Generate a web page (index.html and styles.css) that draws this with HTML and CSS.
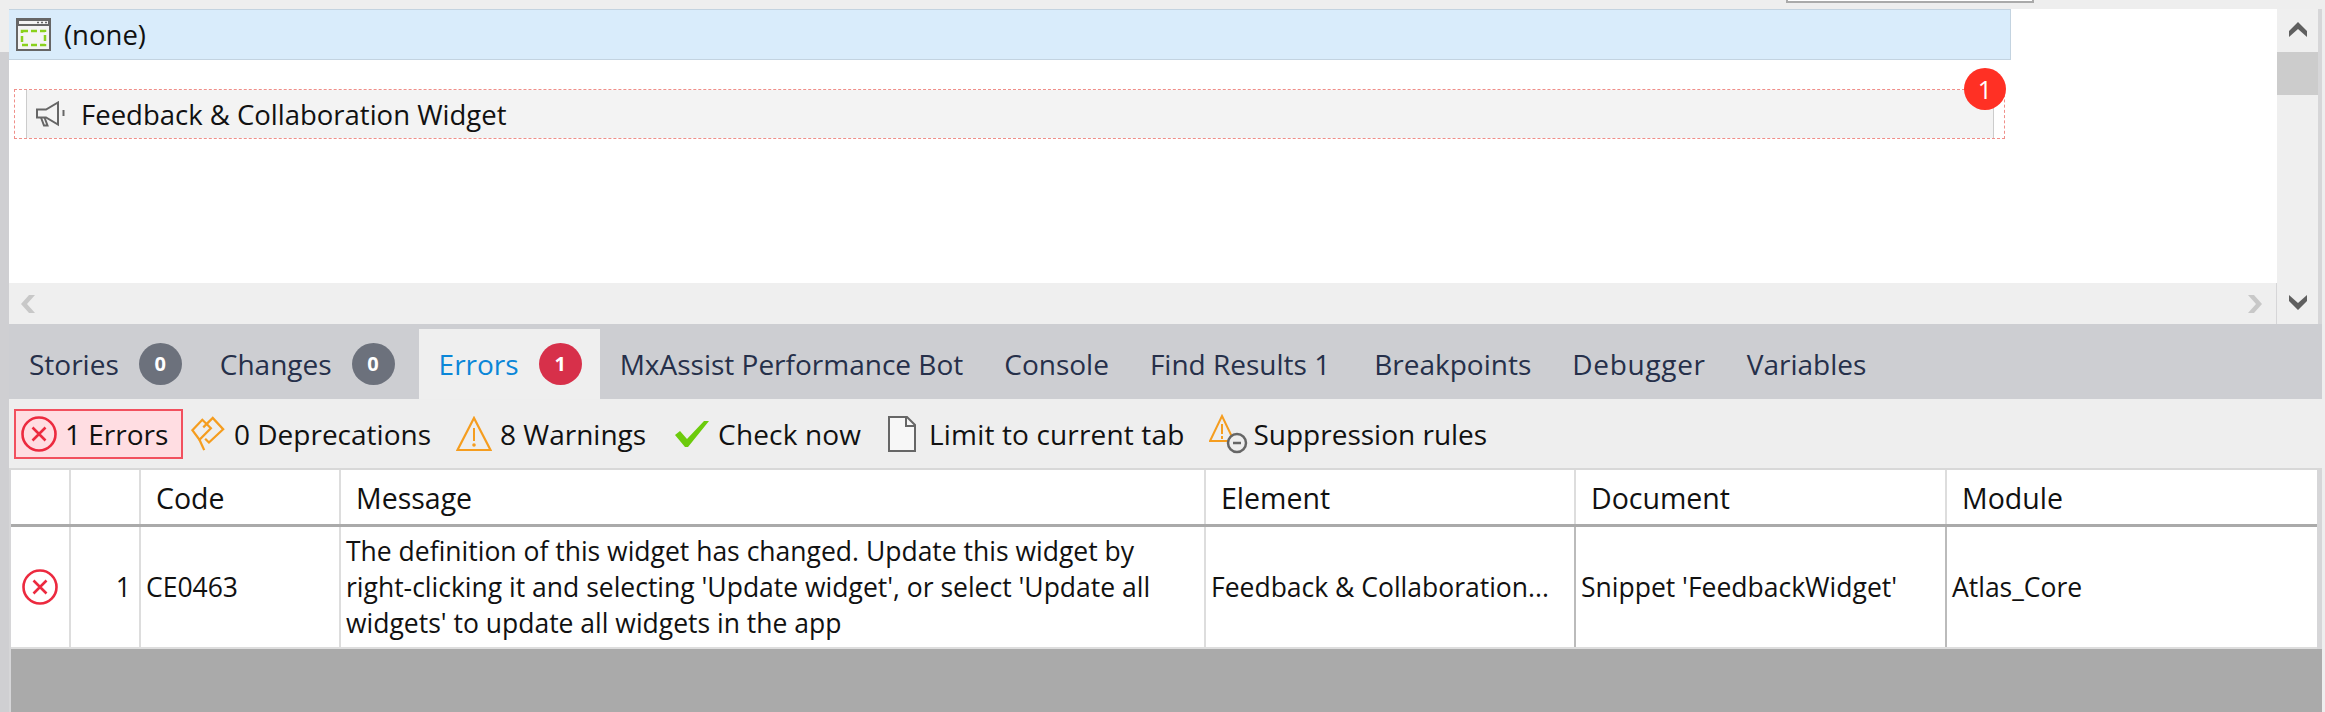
FILE: index.html
```html
<!DOCTYPE html>
<html>
<head>
    <title>Errors</title>
    <link rel="stylesheet" href="styles.css">
</head>
<body>
    <div class="edge">
        <div class="edge-top"></div>
    </div>
    <div class="main">
        <div class="top-strip">
            <div class="search-box"></div>
        </div>
        <div class="canvas-row">
            <div class="canvas-col">
                <div class="canvas">
                    <div class="layout-bar">
                        <svg class="icon-window" viewBox="0 0 35 33">
                            <rect x="1" y="1" width="33" height="31" fill="#f4f4f4" stroke="#666" stroke-width="2"/>
                            <rect x="1" y="1" width="33" height="7" fill="#666"/>
                            <rect x="3" y="3" width="29" height="3" fill="#f4f4f4"/>
                            <path d="M21 4.500h2M25 4.500h2M29 4.500h2" stroke="#666" stroke-width="1.500"/>
                            <rect x="6" y="13" width="23" height="14" fill="none" stroke="#8ad11c" stroke-width="2.500" stroke-dasharray="6 3"/>
                        </svg>
                        <span>(none)</span>
                    </div>
                    <div class="widget-wrap">
                        <div class="widget">
                            <svg class="icon-horn" viewBox="0 0 32 26">
                                <path d="M2 8.500h9L23 1.500v22L11 16.500H2z" fill="none" stroke="#666" stroke-width="2"/>
                                <path d="M6 16.500l3 8h3.500l-3-8" fill="none" stroke="#666" stroke-width="2"/>
                                <path d="M28.500 9v6" stroke="#666" stroke-width="2"/>
                            </svg>
                            <span>Feedback &amp; Collaboration Widget</span>
                        </div>
                        <div class="widget-badge">1</div>
                    </div>
                </div>
                <div class="hscroll">
                    <svg class="arrow" viewBox="0 0 16 18"><path d="M15 0L7 9l8 9H9L1 9l8-9z" fill="#c8c8c8"/></svg>
                    <svg class="arrow" viewBox="0 0 16 18"><path d="M1 0l8 9-8 9h6l8-9-8-9z" fill="#c8c8c8"/></svg>
                </div>
            </div>
            <div class="vscroll">
                <svg class="arrow-v" viewBox="0 0 18 16"><path d="M0 16V10L9 1l9 9v6L9 8z" fill="#5f5f5f"/></svg>
                <div class="thumb"></div>
                <svg class="arrow-v arrow-down" viewBox="0 0 18 16"><path d="M0 0v6l9 9 9-9V0L9 8z" fill="#5f5f5f"/></svg>
            </div>
        </div>

        <div class="tabs">
            <div class="tab tab-stories">Stories <span class="count">0</span></div>
            <div class="tab tab-changes">Changes <span class="count">0</span></div>
            <div class="tab active">Errors <span class="count red">1</span></div>
            <div class="tab">MxAssist Performance Bot</div>
            <div class="tab">Console</div>
            <div class="tab tab-find">Find Results 1</div>
            <div class="tab">Breakpoints</div>
            <div class="tab tab-debugger">Debugger</div>
            <div class="tab">Variables</div>
        </div>

        <div class="toolbar">
            <div class="tool tool-errors">
                <svg class="icon" viewBox="0 0 36 36">
                    <circle cx="18" cy="18" r="16.500" fill="none" stroke="#ec2a3f" stroke-width="2.600"/>
                    <path d="M11.500 11.500l13 13M24.500 11.500l-13 13" stroke="#ec2a3f" stroke-width="2.600"/>
                </svg>
                <span>1 Errors</span>
            </div>
            <div class="tool tool-depr">
                <svg class="icon" viewBox="0 0 36 38">
                    <path d="M1.500 15L12 4l9 9-12 12z" fill="none" stroke="#f59d1f" stroke-width="2.400"/>
                    <path d="M13 12L23 2l11 12-15 14-4-4" fill="none" stroke="#f59d1f" stroke-width="2.400"/>
                    <path d="M14 36L9 25" stroke="#f59d1f" stroke-width="2.400"/>
                </svg>
                <span>0 Deprecations</span>
            </div>
            <div class="tool tool-warn">
                <svg class="icon" viewBox="0 0 36 36">
                    <path d="M18 2L34.500 34H1.500z" fill="none" stroke="#f59d1f" stroke-width="2.200"/>
                    <path d="M18 12v13" stroke="#f59d1f" stroke-width="2"/>
                    <circle cx="18" cy="29" r="1.800" fill="#f59d1f"/>
                </svg>
                <span>8 Warnings</span>
            </div>
            <div class="tool tool-check">
                <svg class="icon icon-check" viewBox="0 0 36 28">
                    <path d="M1 15l5-4 7 8L30 1h5L14 27h-3z" fill="#6ccb0c"/>
                </svg>
                <span>Check now</span>
            </div>
            <div class="tool tool-file">
                <svg class="icon icon-file" viewBox="0 0 28 36">
                    <path d="M1 1h18l8 8v26H1z" fill="#f7f7f7" stroke="#666" stroke-width="2"/>
                    <path d="M18 1v9h9" fill="none" stroke="#666" stroke-width="2"/>
                </svg>
                <span>Limit to current tab</span>
            </div>
            <div class="tool tool-supp">
                <svg class="icon icon-supp" viewBox="0 0 39 40">
                    <path d="M13 2L25 27H1z" fill="none" stroke="#f59d1f" stroke-width="2"/>
                    <path d="M13 10v10M13 22v3" stroke="#f59d1f" stroke-width="2"/>
                    <circle cx="28" cy="29" r="9" fill="#eee" stroke="#666" stroke-width="2.500"/>
                    <path d="M24 29h8" stroke="#666" stroke-width="2.500"/>
                </svg>
                <span>Suppression rules</span>
            </div>
        </div>

        <div class="results">
            <table class="errors">
                <thead>
                    <tr>
                        <th class="col-icon"></th>
                        <th class="col-num"></th>
                        <th class="col-code">Code</th>
                        <th class="col-msg">Message</th>
                        <th class="col-elem">Element</th>
                        <th class="col-doc">Document</th>
                        <th>Module</th>
                    </tr>
                </thead>
                <tbody>
                    <tr>
                        <td class="cell-icon">
                            <svg class="icon" viewBox="0 0 36 36">
                                <circle cx="18" cy="18" r="16.500" fill="none" stroke="#ec2a3f" stroke-width="2.600"/>
                                <path d="M11.500 11.500l13 13M24.500 11.500l-13 13" stroke="#ec2a3f" stroke-width="2.600"/>
                            </svg>
                        </td>
                        <td class="cell-num">1</td>
                        <td>CE0463</td>
                        <td>The definition of this widget has changed. Update this widget by right-clicking it and selecting 'Update widget', or select 'Update all widgets' to update all widgets in the app</td>
                        <td>Feedback &amp; Collaboration...</td>
                        <td class="cell-dark">Snippet 'FeedbackWidget'</td>
                        <td class="cell-dark">Atlas_Core</td>
                    </tr>
                </tbody>
            </table>
            <div class="empty"></div>
        </div>
    </div>
    <div class="edge-right"></div>
</body>
</html>
```

FILE: styles.css
```css
html, body {
    height: 100%;
}
body {
    margin: 0;
    display: flex;
    height: 712px;
    overflow: hidden;
    font-family: "Open Sans", "Noto Sans", sans-serif;
    font-size: 27.5px;
    color: #111;
    background: #eee;
}
svg {
    display: block;
    flex: none;
}
.edge {
    width: 9px;
    flex: none;
    background: #cfcfd2;
}
.edge-top {
    height: 52px;
    background: #eee;
}
.edge-right {
    width: 3px;
    flex: none;
    background: #eee;
}
.main {
    flex: 1;
    min-width: 0;
    display: flex;
    flex-direction: column;
    background: #d6d6d8;
}
.top-strip {
    height: 9px;
    flex: none;
    background: #eee;
    padding-left: 1777px;
}
.search-box {
    width: 248px;
    height: 3px;
    box-sizing: border-box;
    background: #fff;
    border: 2px solid #aaa;
    border-top: none;
}
.canvas-row {
    height: 315px;
    flex: none;
    display: flex;
    margin-right: 4px;
}
.canvas-col {
    flex: 1;
    display: flex;
    flex-direction: column;
}
.canvas {
    height: 274px;
    background: #fff;
}
.layout-bar {
    width: 2002px;
    height: 51px;
    box-sizing: border-box;
    border: 1px solid #c3d3e0;
    border-left: none;
    background: #d9ecfb;
    display: flex;
    align-items: center;
    padding-left: 7px;
    gap: 13px;
}
.icon-window {
    width: 35px;
    height: 33px;
}
.widget-wrap {
    position: relative;
    width: 1991px;
    height: 50px;
    box-sizing: border-box;
    margin: 29px 0 0 5px;
    border: 1px dashed #ef8f8a;
    padding: 0 10px 0 11px;
}
.widget {
    height: 100%;
    background: #f3f3f3;
    border: 1px solid #ccc;
    border-top: none;
    border-bottom: none;
    display: flex;
    align-items: center;
    padding-left: 8px;
    gap: 14px;
}
.icon-horn {
    width: 32px;
    height: 26px;
}
.widget-badge {
    position: absolute;
    top: -22px;
    right: -2px;
    width: 42px;
    height: 42px;
    border-radius: 50%;
    background: #ff3024;
    color: #fff;
    font-size: 25px;
    line-height: 42px;
    text-align: center;
}
.hscroll {
    flex: 1;
    background: #efefef;
    display: flex;
    justify-content: space-between;
    align-items: center;
    padding: 0 13px 0 11px;
    margin-right: 1px;
}
.arrow {
    width: 16px;
    height: 18px;
}
.vscroll {
    width: 41px;
    flex: none;
    background: #efefef;
    display: flex;
    flex-direction: column;
    align-items: center;
}
.arrow-v {
    width: 18px;
    height: 16px;
    margin-top: 12px;
}
.thumb {
    width: 100%;
    height: 43px;
    margin-top: 15px;
    background: #ccc;
}
.arrow-down {
    margin-top: auto;
    margin-bottom: 13px;
}
.tabs {
    height: 75px;
    flex: none;
    background: #cdced2;
    display: flex;
    align-items: flex-end;
    color: #26304a;
    font-size: 28px;
}
.tab {
    height: 70px;
    display: flex;
    align-items: center;
    gap: 20px;
    padding: 0 21px 0 20px;
}
.tab-stories {
    padding-right: 18px;
}
.tab-changes {
    padding-right: 24px;
}
.tab-find {
    padding-right: 24px;
}
.tab-debugger {
    letter-spacing: 0.7px;
}
.tab.active {
    background: #efefef;
    color: #0a86d8;
    padding-right: 18px;
}
.count {
    width: 43px;
    height: 42px;
    border-radius: 50%;
    background: #6c717c;
    color: #fff;
    font-size: 20px;
    font-weight: 700;
    line-height: 42px;
    text-align: center;
    letter-spacing: 0;
}
.count.red {
    background: #d7304a;
}
.toolbar {
    height: 71px;
    flex: none;
    box-sizing: border-box;
    background: #eee;
    border-bottom: 2px solid #d8d8d8;
    display: flex;
    align-items: center;
    padding-left: 5px;
    font-size: 28px;
}
.tool {
    height: 50px;
    box-sizing: border-box;
    display: flex;
    align-items: center;
    gap: 8px;
    padding-left: 25px;
    white-space: nowrap;
}
.icon {
    width: 36px;
    height: 36px;
}
.icon-check {
    height: 28px;
}
.icon-file {
    width: 28px;
}
.icon-supp {
    width: 39px;
    height: 40px;
}
.tool-errors {
    width: 169px;
    background: #ffdde2;
    border: 2px solid #f2505e;
    padding-left: 5px;
}
.tool-depr {
    padding-left: 7px;
}
.tool-check {
    padding-left: 28px;
    letter-spacing: 0.15px;
}
.tool-file {
    padding-left: 27px;
    gap: 13px;
    letter-spacing: 0.15px;
}
.tool-supp {
    gap: 5px;
}
.results {
    flex: 1;
    display: flex;
    flex-direction: column;
    padding-left: 2px;
    min-height: 0;
}
.errors {
    width: 2306px;
    flex: none;
    table-layout: fixed;
    border-collapse: collapse;
    background: #fff;
    font-size: 26.5px;
}
.errors th, .errors td {
    box-sizing: border-box;
    border-left: 2px solid #ddd;
    font-weight: 400;
    text-align: left;
    padding: 0 5px;
}
.errors th:first-child, .errors td:first-child {
    border-left: none;
}
.errors th {
    height: 55px;
    padding: 2px 5px 0 15px;
    font-size: 28.5px;
    border-bottom: 3px solid #aaa;
}
.errors td {
    height: 123px;
    line-height: 36px;
    border-bottom: 2px solid #ddd;
}
.errors .cell-dark {
    border-left-color: #bbb;
}
.col-icon { width: 59px; }
.col-num { width: 70px; }
.col-code { width: 200px; }
.col-msg { width: 865px; }
.col-elem { width: 370px; }
.col-doc { width: 371px; }
.errors .cell-num {
    text-align: right;
    padding-right: 8px;
}
.cell-icon svg {
    margin: 0 auto;
}
.empty {
    flex: 1;
    background: #aaa;
}
```
